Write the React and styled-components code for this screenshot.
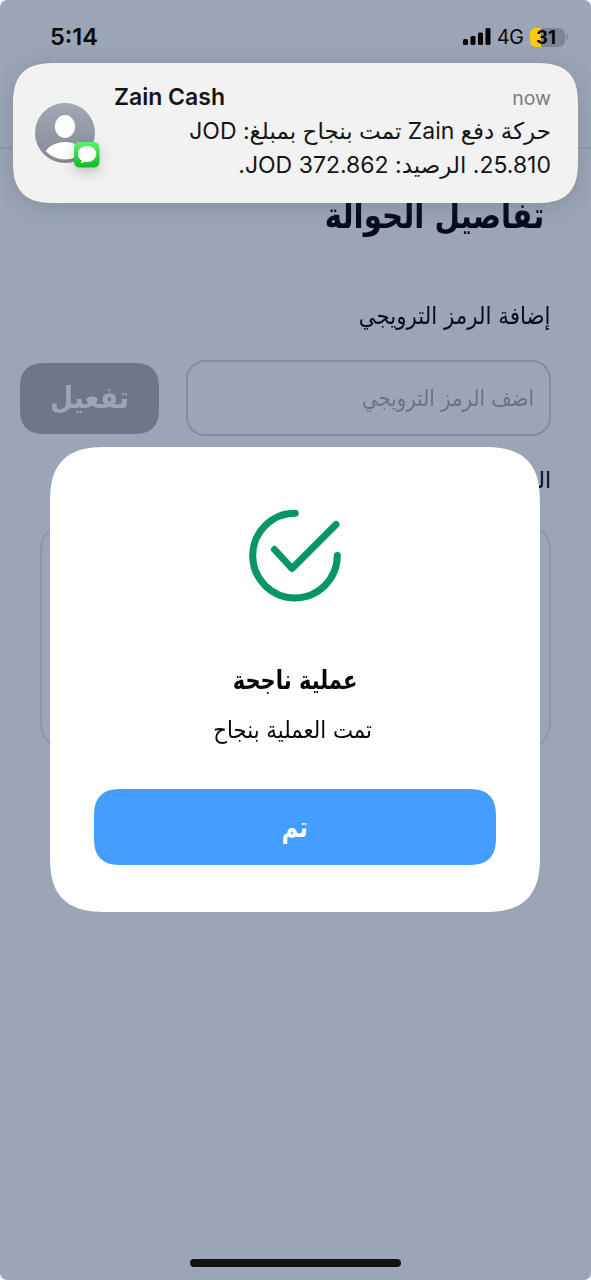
import React from "react";
import styled, { createGlobalStyle } from "styled-components";

const GlobalStyle = createGlobalStyle`
	* {
		box-sizing: border-box;
	}

	body {
		margin: 0;
		background: #fff;
		font-family: Inter, "DejaVu Sans", sans-serif;
	}
`;

const Screen = styled.div`
	position: relative;
	display: flex;
	flex-direction: column;
	width: 591px;
	height: 1280px;
	overflow: hidden;
	border-radius: 7px;
	background: #9ba5b5;
`;

const StatusBar = styled.header`
	display: flex;
	justify-content: space-between;
	height: 149px;
	padding: 24px 23px 0 50px;
	border-bottom: 2px solid #919aab;
	color: #05070c;
`;

const Time = styled.span`
	font-size: 23.5px;
	line-height: 26px;
	font-weight: 600;
`;

const StatusIcons = styled.div`
	display: flex;
	align-items: center;
	height: 26px;
`;

const Signal = styled.svg`
	width: 28px;
	height: 18px;
	margin-right: 6px;
`;

const Network = styled.span`
	width: 26px;
	margin-right: 7px;
	font-size: 19.5px;
	letter-spacing: -0.3px;
	white-space: nowrap;
`;

const Battery = styled.span`
	width: 35px;
	height: 19px;
	padding-right: 3px;
	border-radius: 6px;
	background: linear-gradient(90deg, #fdcb0a 31%, #7d8594 31%);
	font-size: 18.5px;
	line-height: 18px;
	font-weight: 700;
	text-align: center;
`;

const BatteryCap = styled.span`
	width: 2px;
	height: 6px;
	margin-left: 1px;
	border-radius: 0 2px 2px 0;
	background: #838c9b;
`;

const Arabic = styled.span`
	display: inline-block;
	font-family: "DejaVu Sans", sans-serif;
	font-size: ${props => props.$size}px;
	font-weight: ${props => props.$weight || 400};
	line-height: ${props => props.$line || 40}px;
	white-space: nowrap;
	transform: scaleX(${props => props.$stretch || 1});
	transform-origin: ${props => props.$origin || "right"} center;
`;

const Page = styled.main`
	display: flex;
	flex-direction: column;
	padding: 47px 40px 0;
	color: #060b1c;
`;

const Title = styled.h1`
	height: 40px;
	margin: 0 7px 60px 0;
	font-size: 34px;
	line-height: 40px;
`;

const Label = styled.div`
	height: 40px;
`;

const PromoRow = styled.div`
	display: flex;
	align-items: center;
	justify-content: space-between;
	height: 76px;
	margin: 24px 0 25px -20px;
	direction: rtl;
`;

const PromoField = styled.div`
	display: flex;
	align-items: center;
	width: 365px;
	height: 76px;
	padding: 0 15px;
	border: 2px solid #848e9f;
	border-radius: 19px;
	color: #697384;
`;

const ActivateButton = styled.button`
	width: 139px;
	height: 71px;
	padding: 0;
	border: 0;
	border-radius: 26px;
	corner-shape: superellipse(1.4);
	background: #6e7787;
	color: #9ba5b5;
`;

const DetailsCard = styled.section`
	height: 227px;
	margin-top: 22px;
	border: 2px solid #8e97a8;
	border-radius: 26px;
`;

const Modal = styled.div`
	position: absolute;
	top: 447px;
	left: 50px;
	display: flex;
	flex-direction: column;
	align-items: center;
	width: 490px;
	height: 465px;
	padding: 60px 44px 0;
	border-radius: 58px;
	corner-shape: superellipse(1.45);
	background: #fff;
	color: #070707;
`;

const SuccessIcon = styled.svg`
	width: 96px;
	height: 96px;
	margin-bottom: 57px;
`;

const ModalText = styled.div`
	height: 50px;
	padding: 2px 5px 0 0;
	margin-bottom: 39px;
`;

const DoneButton = styled.button`
	width: 402px;
	height: 76px;
	padding: 0;
	border: 0;
	border-radius: 28px;
	corner-shape: superellipse(1.4);
	background: #449eff;
	color: #fff;
`;

const Banner = styled.div`
	position: absolute;
	top: 63px;
	left: 13px;
	display: flex;
	width: 565px;
	height: 140px;
	padding: 19px 27px 0 22px;
	border-radius: 44px;
	corner-shape: superellipse(1.5);
	background: #f2f2f2;
	box-shadow: 0 4px 22px rgba(60, 70, 90, 0.22);
	color: #151515;
`;

const Avatar = styled.svg`
	width: 72px;
	height: 80px;
	margin: 20px 7px 0 0;
	overflow: visible;
`;

const Message = styled.div`
	flex: 1;
`;

const MessageHead = styled.div`
	display: flex;
	justify-content: space-between;
	height: 32px;
`;

const Sender = styled.span`
	font-size: 23px;
	line-height: 30px;
	font-weight: 600;
`;

const When = styled.span`
	font-size: 19.5px;
	line-height: 32px;
	color: #7e7e7e;
`;

const MessageLine = styled.div`
	height: 34px;
	direction: rtl;
	font-size: 23px;
	line-height: 34px;
	white-space: nowrap;
`;

const HomeIndicator = styled.div`
	position: absolute;
	bottom: 13px;
	left: 190px;
	width: 211px;
	height: 8px;
	border-radius: 4px;
	background: #111213;
`;

function StatusRow() {
	return (
		<StatusBar>
			<Time>5:14</Time>
			<StatusIcons>
				<Signal viewBox="0 0 28 18">
					<rect x="0" y="11" width="5" height="6" rx="1.5" />
					<rect x="7.5" y="8" width="5" height="9" rx="1.5" />
					<rect x="15" y="4.5" width="5" height="12.5" rx="1.5" />
					<rect x="22.5" y="0" width="5" height="17" rx="1.5" />
				</Signal>
				<Network>4G</Network>
				<Battery>31</Battery>
				<BatteryCap />
			</StatusIcons>
		</StatusBar>
	);
}

function Notification() {
	return (
		<Banner>
			<Avatar viewBox="0 0 72 80">
				<defs>
					<linearGradient id="avatar" x1="0" y1="0" x2="0" y2="1">
						<stop offset="0" stopColor="#a3a8b5" />
						<stop offset="1" stopColor="#858894" />
					</linearGradient>
					<linearGradient id="bubble" x1="0" y1="0" x2="0" y2="1">
						<stop offset="0" stopColor="#5cf26b" />
						<stop offset="1" stopColor="#08bd23" />
					</linearGradient>
					<clipPath id="face">
						<circle cx="30" cy="31" r="26.5" />
					</clipPath>
					<filter id="soft" x="-60%" y="-60%" width="220%" height="240%">
						<feDropShadow dx="0" dy="5" stdDeviation="6" floodOpacity="0.2" />
					</filter>
				</defs>
				<circle cx="30" cy="31" r="30" fill="url(#avatar)" />
				<ellipse cx="30" cy="24.5" rx="10.2" ry="11.4" fill="#fff" />
				<ellipse cx="30" cy="55.5" rx="21" ry="15.5" fill="#fff" clipPath="url(#face)" />
				<rect x="39" y="40" width="25.5" height="25.5" rx="5.5" fill="url(#bubble)" filter="url(#soft)" />
				<ellipse cx="52" cy="52" rx="9.3" ry="8" fill="#fff" />
				<path d="M47 56.5 Q47.5 60 45 61 Q49 61 51 58.5 Z" fill="#fff" />
			</Avatar>
			<Message>
				<MessageHead>
					<Sender>Zain Cash</Sender>
					<When>now</When>
				</MessageHead>
				<MessageLine>حركة دفع Zain تمت بنجاح بمبلغ: JOD</MessageLine>
				<MessageLine>25.810. الرصيد: 372.862 JOD.</MessageLine>
			</Message>
		</Banner>
	);
}

function SuccessModal() {
	return (
		<Modal dir="rtl">
			<SuccessIcon viewBox="0 0 96 96" fill="none" stroke="#079763" strokeWidth="7" strokeLinecap="round" strokeLinejoin="round">
				<path d="M48.3 6.3 A42.3 42.3 0 1 0 90.3 48.5" />
				<path d="M27.5 42.5 L45 61.5 L89 17.5" />
			</SuccessIcon>
			<Arabic $size={26} $weight={700} $stretch={0.81} $origin="center">عملية ناجحة</Arabic>
			<ModalText>
				<Arabic $size={23.5} $line={56} $stretch={0.905} $origin="center">تمت العملية بنجاح</Arabic>
			</ModalText>
			<DoneButton>
				<Arabic $size={29} $weight={700} $stretch={0.78} $origin="center">تم</Arabic>
			</DoneButton>
		</Modal>
	);
}

function App() {
	return (
		<Screen>
			<GlobalStyle />
			<StatusRow />
			<Page dir="rtl">
				<Title>
					<Arabic $size={36} $weight={700} $stretch={0.815}>تفاصيل الحوالة</Arabic>
				</Title>
				<Label>
					<Arabic $size={24} $stretch={0.89}>إضافة الرمز الترويجي</Arabic>
				</Label>
				<PromoRow>
					<PromoField>
						<Arabic $size={23} $stretch={0.86}>اضف الرمز الترويجي</Arabic>
					</PromoField>
					<ActivateButton>
						<Arabic $size={30} $weight={700} $stretch={0.89} $origin="center">تفعيل</Arabic>
					</ActivateButton>
				</PromoRow>
				<Label>
					<Arabic $size={22}>المبلغ</Arabic>
				</Label>
				<DetailsCard />
			</Page>
			<SuccessModal />
			<Notification />
			<HomeIndicator />
		</Screen>
	);
}

export default App;
